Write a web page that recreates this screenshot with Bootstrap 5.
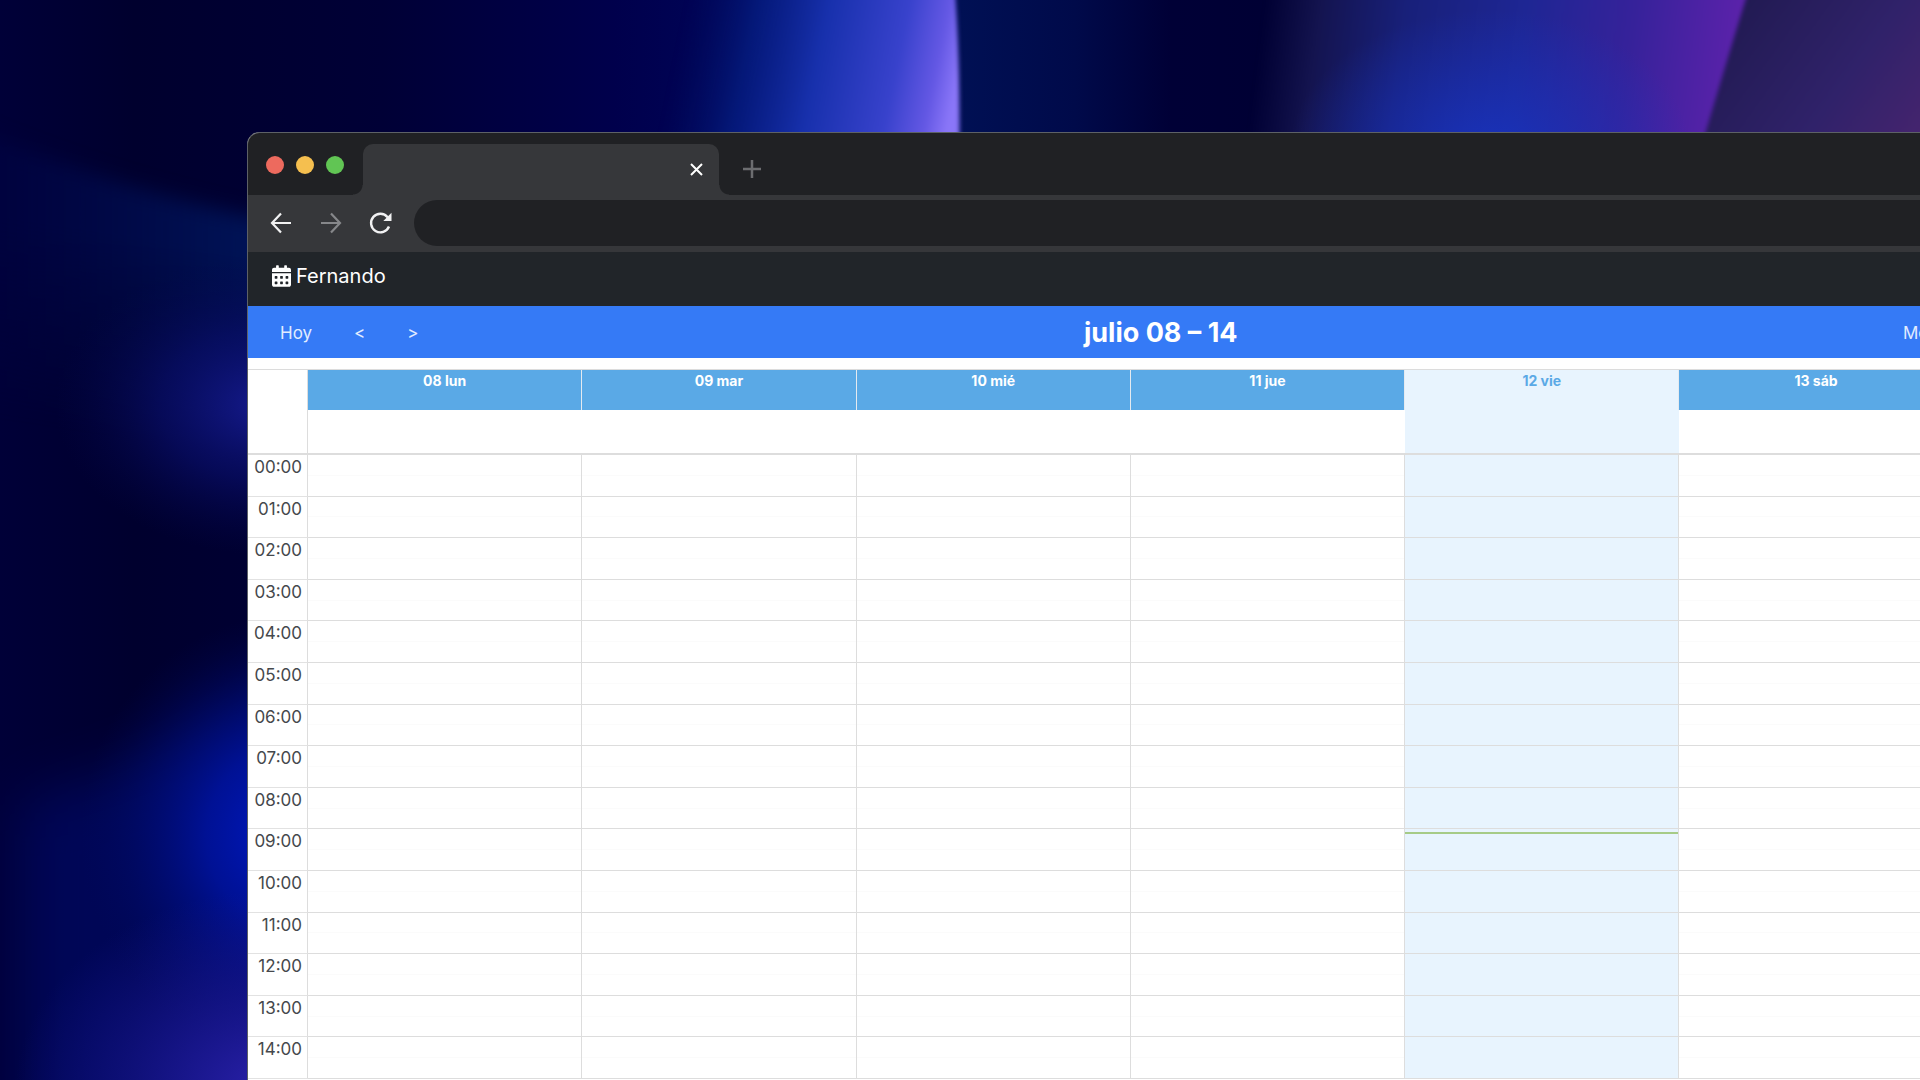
<!DOCTYPE html>
<html lang="es">
<head>
<meta charset="utf-8">
<meta name="viewport" content="width=device-width, initial-scale=1">
<title>Calendario semanal</title>
<link href="https://cdn.jsdelivr.net/npm/bootstrap@5.3.0/dist/css/bootstrap.min.css" rel="stylesheet">
<style>
  body { font-family: Inter, "Liberation Sans", sans-serif; background: #00002f; }
  .desktop { height: 100vh; isolation: isolate; }
  .wallpaper { z-index: -1; }
  /* the browser window runs past the right and bottom edges of the desktop */
  .browser { margin: 132px -309px 0 247px; border: 1px solid #5d6166; border-radius: 12px 12px 0 0; background: #fff; }
  .tab-strip { height: 62px; background: #202124; }
  .lights { gap: 12px; width: 115px; height: 62px; padding: 2px 0 0 18px; }
  .light { width: 18px; height: 18px; }
  .light-close { background: #ed6a5e; }
  .light-min { background: #f5bf4f; }
  .light-max { background: #61c554; }
  .tab-active { position: relative; width: 356px; height: 51px; background: #36373a; border-radius: 10px 10px 0 0; padding: 0 15px 0 0; }
  .tab-active::before, .tab-active::after { content: ""; position: absolute; bottom: 0; width: 10px; height: 10px; }
  .tab-active::before { right: 100%; background: radial-gradient(circle at 0 0, #202124 9px, #36373a 10px); }
  .tab-active::after { left: 100%; background: radial-gradient(circle at 100% 0, #202124 9px, #36373a 10px); }
  .tool { border: 0; background: none; padding: 0; line-height: 0; }
  .new-tab { margin: 0 0 17px 24px; }
  .address-row { height: 57px; background: #36373a; gap: 26px; padding: 0 0 2px 21px; }
  .address { height: 46px; border: 0; border-radius: 23px; background: #202124; color: #e8eaed; padding: 0 24px; margin: 0 0 0 -5px; }
  .app-nav { height: 54px; background: #212529; padding: 0 0 0 24px; }
  .app-nav .navbar-brand { font-size: 20px; line-height: 30px; gap: 5px; margin: 0; padding: 0 0 6px; }
  .cal-toolbar { height: 52px; background: #357af6; padding: 1px 16px 0; }
  .cal-group { gap: 10px; }
  .cal-group-views { width: 325px; }
  .cal-btn { border: 0; background: none; color: #e1ecff; font-size: 17px; line-height: 24px; padding: 6px 16px; }
  .cal-title { font-size: 27px; line-height: 32px; font-weight: 700; margin: 0; color: #fff; }
  .week { table-layout: fixed; width: 100%; height: 710px; margin-top: 11px; border-collapse: separate; border-spacing: 0; border-top: 1px solid #dcdcdc; }
  .week th, .week td { padding: 0; vertical-align: top; }
  .week .hour-col { width: 60px; border-right: 1px solid #ddd; }
  .week .day-head { height: 40px; background: #5aa9e6; color: #fff; font-size: 14px; line-height: 22px; font-weight: 700; text-align: center; border-right: 1px solid #e4eaf0; }
  .week .day-head.is-today { background: #e8f4fe; color: #5aa9e6; }
  .week .all-day td { height: 45px; border-bottom: 2px solid #ddd; }
  .week .slot { position: relative; border-bottom: 1px solid #ddd; border-right: 1px solid #ddd; background: linear-gradient(#fbfbfb, #fbfbfb) 0 50% / 100% 1px no-repeat; }
  .week .hour-label { border-bottom: 1px solid #e2e2e2; font-weight: 400; font-size: 17px; line-height: 24px; color: #45484c; text-align: right; padding-right: 5px; }
  .week td.is-today { background: #e8f4fe; }
  .now-line { position: absolute; left: 0; right: 0; top: 3px; height: 2px; background: #a6cb87; }
</style>
</head>
<body>
<div class="desktop position-relative overflow-hidden">
  <svg class="wallpaper position-absolute top-0 start-0 w-100 h-100" viewBox="0 0 1920 1080" preserveAspectRatio="none" aria-hidden="true">
    <defs>
      <linearGradient id="topBase" gradientUnits="userSpaceOnUse" x1="0" y1="0" x2="1920" y2="0">
        <stop offset="0" stop-color="#000038"/><stop offset=".07" stop-color="#00002e"/><stop offset=".2" stop-color="#000036"/>
        <stop offset=".32" stop-color="#00004c"/><stop offset=".4" stop-color="#00065c"/><stop offset=".5" stop-color="#001054"/><stop offset=".56" stop-color="#000a4a"/>
        <stop offset=".61" stop-color="#000036"/><stop offset=".66" stop-color="#000034"/><stop offset="1" stop-color="#000038"/>
      </linearGradient>
      <linearGradient id="beam" gradientUnits="userSpaceOnUse" x1="680" y1="30" x2="956" y2="86">
        <stop offset="0" stop-color="#000e60" stop-opacity="0"/><stop offset=".25" stop-color="#051d80" stop-opacity=".8"/><stop offset=".5" stop-color="#1730ac"/>
        <stop offset=".78" stop-color="#3842cc"/><stop offset=".92" stop-color="#6458e4"/><stop offset="1" stop-color="#8a76f8"/>
      </linearGradient>
      <linearGradient id="violet" gradientUnits="userSpaceOnUse" x1="1260" y1="40" x2="1728" y2="100">
        <stop offset="0" stop-color="#14144c" stop-opacity="0"/><stop offset=".12" stop-color="#141450"/><stop offset=".3" stop-color="#18207a"/>
        <stop offset=".55" stop-color="#1e2694"/><stop offset=".78" stop-color="#36229a"/><stop offset="1" stop-color="#5a22aa"/>
      </linearGradient>
      <linearGradient id="plum" gradientUnits="userSpaceOnUse" x1="1740" y1="0" x2="1920" y2="130">
        <stop offset="0" stop-color="#211a52"/><stop offset=".6" stop-color="#30226a"/><stop offset="1" stop-color="#44246e"/>
      </linearGradient>
      <radialGradient id="core"><stop offset="0" stop-color="#1834c0" stop-opacity=".85"/><stop offset="1" stop-color="#1834c0" stop-opacity="0"/></radialGradient>
      <radialGradient id="indigo"><stop offset="0" stop-color="#151a8c"/><stop offset=".5" stop-color="#0a1070" stop-opacity=".6"/><stop offset="1" stop-color="#040850" stop-opacity="0"/></radialGradient>
      <radialGradient id="royal"><stop offset="0" stop-color="#001ac8"/><stop offset=".4" stop-color="#0014a4" stop-opacity=".8"/><stop offset="1" stop-color="#000a60" stop-opacity="0"/></radialGradient>
      <radialGradient id="purpleLow"><stop offset="0" stop-color="#2c22ac"/><stop offset="1" stop-color="#1818a0" stop-opacity="0"/></radialGradient>
      <linearGradient id="swoosh" gradientUnits="userSpaceOnUse" x1="0" y1="0" x2="250" y2="0">
        <stop offset="0" stop-color="#000342" stop-opacity=".7"/><stop offset="1" stop-color="#001356"/>
      </linearGradient>
      <linearGradient id="fade" gradientUnits="userSpaceOnUse" x1="30" y1="220" x2="0" y2="420">
        <stop offset="0" stop-color="#fff"/><stop offset="1" stop-color="#000"/>
      </linearGradient>
      <mask id="fadeMask" maskUnits="userSpaceOnUse" x="-100" y="0" width="600" height="600"><rect x="-100" width="600" height="600" fill="url(#fade)"/></mask>
      <filter id="soft2" x="-10%" y="-10%" width="120%" height="120%" color-interpolation-filters="sRGB"><feGaussianBlur stdDeviation="2"/></filter>
      <filter id="soft12" x="-20%" y="-20%" width="140%" height="140%" color-interpolation-filters="sRGB"><feGaussianBlur stdDeviation="10"/></filter>
      <filter id="soft24" x="-40%" y="-30%" width="180%" height="160%" color-interpolation-filters="sRGB"><feGaussianBlur stdDeviation="28"/></filter>
    </defs>
    <rect width="1920" height="1080" fill="url(#topBase)"/>
    <g filter="url(#soft2)">
      <path d="M640 -20H954Q961 60 959 180H620Z" fill="url(#beam)"/>
      <path d="M1240 -20H1752Q1724 70 1692 180H1220Z" fill="url(#violet)"/>
      <path d="M1752 -20H1940V180H1692Q1724 70 1752 -20Z" fill="url(#plum)"/>
    </g>
    <ellipse cx="1490" cy="150" rx="200" ry="140" fill="url(#core)"/>
    <g mask="url(#fadeMask)"><path d="M-80 105Q110 195 330 232V480H-80Z" fill="url(#swoosh)" filter="url(#soft12)"/></g>
    <ellipse cx="265" cy="405" rx="210" ry="150" fill="url(#indigo)"/>
    <path d="M360 610Q220 750 20 800V1160H360Z" fill="#000f84" opacity=".45" filter="url(#soft24)"/>
    <ellipse cx="290" cy="835" rx="210" ry="220" fill="url(#royal)"/>
    <ellipse cx="275" cy="1090" rx="260" ry="200" fill="url(#purpleLow)"/>
  </svg>

  <main class="browser overflow-hidden min-vh-100">
    <div class="tab-strip d-flex align-items-end">
      <div class="lights d-flex align-items-center" aria-hidden="true">
        <span class="light light-close rounded-circle"></span>
        <span class="light light-min rounded-circle"></span>
        <span class="light light-max rounded-circle"></span>
      </div>
      <div class="tab-active d-flex align-items-center justify-content-end">
        <button class="tool" type="button" aria-label="Cerrar pestaña">
          <svg width="15" height="15" viewBox="0 0 15 15" fill="none" stroke="#fff" stroke-width="2"><path d="M2 2l11 11M13 2L2 13"/></svg>
        </button>
      </div>
      <button class="tool new-tab" type="button" aria-label="Nueva pestaña">
        <svg width="18" height="18" viewBox="0 0 18 18" fill="none" stroke="#6c6d70" stroke-width="2.500"><path d="M9 0v18M0 9h18"/></svg>
      </button>
    </div>
    <div class="address-row d-flex align-items-center">
      <button class="tool" type="button" aria-label="Atrás">
        <svg width="24" height="24" viewBox="0 0 24 24" fill="none" stroke="#f1f1f2" stroke-width="2.200"><path d="M22 12H4M12 2.500L3 12l9 9.500"/></svg>
      </button>
      <button class="tool" type="button" aria-label="Adelante">
        <svg width="24" height="24" viewBox="0 0 24 24" fill="none" stroke="#86878a" stroke-width="2.200"><path d="M2 12h18M12 2.500L21 12l-9 9.500"/></svg>
      </button>
      <button class="tool" type="button" aria-label="Recargar">
        <svg width="24" height="24" viewBox="2 0 24 24"><path d="M22 15.500A9.300 9.300 0 1 1 20.600 6.200" fill="none" stroke="#f1f1f2" stroke-width="2.400"/><path d="M24.500 1.800V10h-8.200z" fill="#f1f1f2"/></svg>
      </button>
      <input class="address flex-grow-1" type="text" aria-label="Dirección">
    </div>

    <nav class="app-nav navbar navbar-dark">
      <a class="navbar-brand d-flex align-items-center" href="#">
        <svg width="19" height="22" viewBox="0 0 448 512" fill="#fff" aria-hidden="true"><path fill-rule="evenodd" d="M0 464c0 26.500 21.500 48 48 48h352c26.500 0 48-21.500 48-48V192H0v272zm320-196c0-6.600 5.400-12 12-12h40c6.600 0 12 5.400 12 12v40c0 6.600-5.400 12-12 12h-40c-6.600 0-12-5.400-12-12v-40zm0 128c0-6.600 5.400-12 12-12h40c6.600 0 12 5.400 12 12v40c0 6.600-5.400 12-12 12h-40c-6.600 0-12-5.400-12-12v-40zM192 268c0-6.600 5.400-12 12-12h40c6.600 0 12 5.400 12 12v40c0 6.600-5.400 12-12 12h-40c-6.600 0-12-5.400-12-12v-40zm0 128c0-6.600 5.400-12 12-12h40c6.600 0 12 5.400 12 12v40c0 6.600-5.400 12-12 12h-40c-6.600 0-12-5.400-12-12v-40zM64 268c0-6.600 5.400-12 12-12h40c6.600 0 12 5.400 12 12v40c0 6.600-5.400 12-12 12H76c-6.600 0-12-5.400-12-12v-40zm0 128c0-6.600 5.400-12 12-12h40c6.600 0 12 5.400 12 12v40c0 6.600-5.400 12-12 12H76c-6.600 0-12-5.400-12-12v-40zM400 64h-48V16c0-8.800-7.200-16-16-16h-32c-8.800 0-16 7.200-16 16v48H160V16c0-8.800-7.200-16-16-16h-32c-8.800 0-16 7.200-16 16v48H48C21.500 64 0 85.500 0 112v48h448v-48c0-26.500-21.500-48-48-48z"/></svg>
        Fernando
      </a>
    </nav>

    <div class="cal-toolbar d-flex align-items-center justify-content-between">
      <div class="cal-group d-flex">
        <button class="cal-btn" type="button">Hoy</button>
        <button class="cal-btn" type="button">&lt;</button>
        <button class="cal-btn" type="button">&gt;</button>
      </div>
      <h1 class="cal-title">julio 08 – 14</h1>
      <div class="cal-group cal-group-views d-flex">
        <button class="cal-btn" type="button">Mes</button>
      </div>
    </div>

    <table class="week">
      <thead>
        <tr>
          <td class="hour-col"></td>
          <th class="day-head" scope="col">08 lun</th>
          <th class="day-head" scope="col">09 mar</th>
          <th class="day-head" scope="col">10 mié</th>
          <th class="day-head" scope="col">11 jue</th>
          <th class="day-head is-today" scope="col">12 vie</th>
          <th class="day-head" scope="col">13 sáb</th>
          <td class="day-head"></td>
        </tr>
        <tr class="all-day">
          <td class="hour-col"></td><td></td><td></td><td></td><td></td><td class="is-today"></td><td></td><td></td>
        </tr>
      </thead>
      <tbody id="hours"></tbody>
    </table>
  </main>
</div>
<script>
  // One row for each hour, one slot for each day of the week.
  const today = 4, currentHour = 9, lastHour = 14;
  const body = document.getElementById('hours');
  for (let h = 0; h <= lastHour; h++) {
    const row = body.insertRow();
    const label = document.createElement('th');
    label.scope = 'row';
    label.className = 'hour-col hour-label';
    label.textContent = String(h).padStart(2, '0') + ':00';
    row.append(label);
    for (let d = 0; d < 7; d++) {
      const slot = row.insertCell();
      slot.className = 'slot' + (d === today ? ' is-today' : '');
      if (d === today && h === currentHour) slot.innerHTML = '<div class="now-line"></div>';
    }
  }
</script>
<script src="https://cdn.jsdelivr.net/npm/bootstrap@5.3.0/dist/js/bootstrap.bundle.min.js"></script>
</body>
</html>
